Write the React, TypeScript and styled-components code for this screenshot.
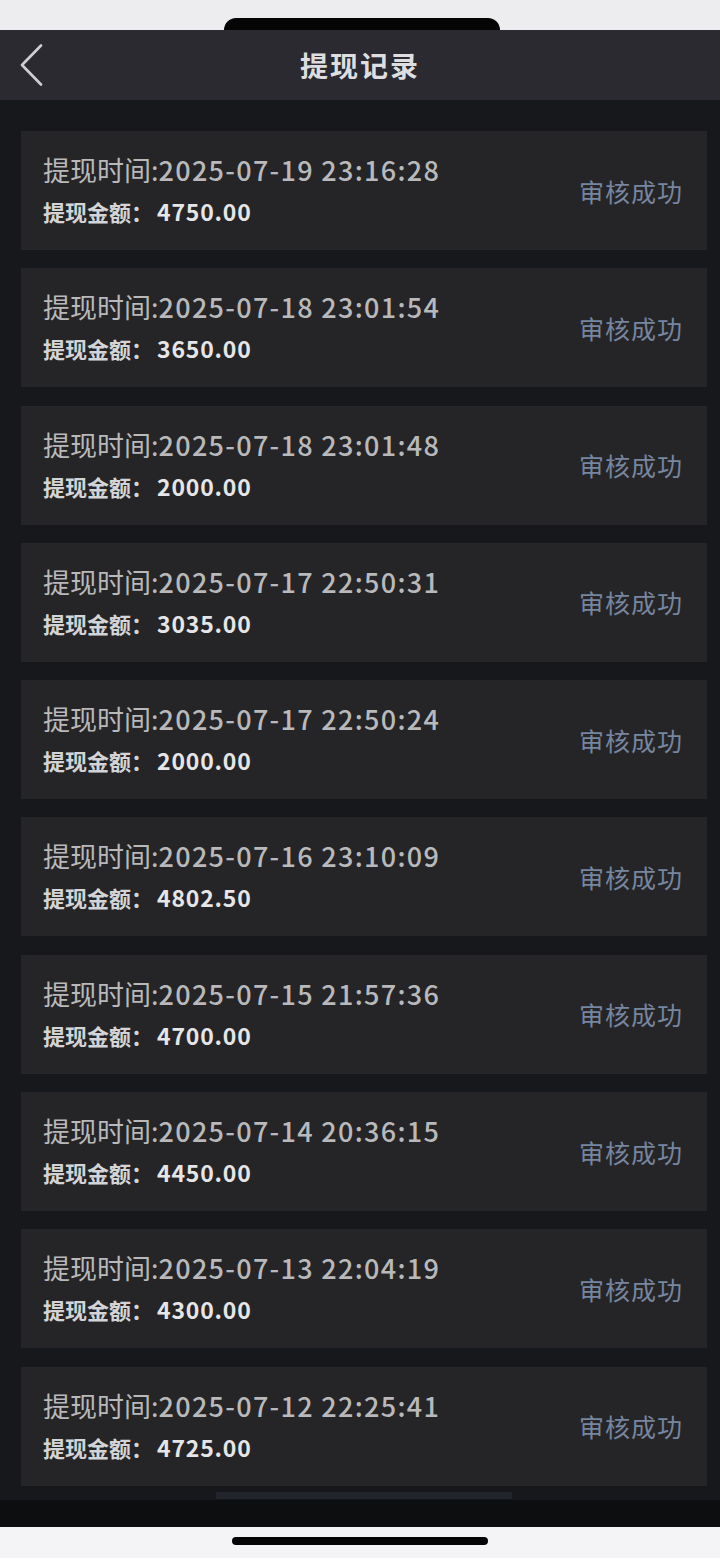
import { createGlobalStyle, styled } from "styled-components";

const records = [
	{ time: "2025-07-19 23:16:28", amount: "4750.00" },
	{ time: "2025-07-18 23:01:54", amount: "3650.00" },
	{ time: "2025-07-18 23:01:48", amount: "2000.00" },
	{ time: "2025-07-17 22:50:31", amount: "3035.00" },
	{ time: "2025-07-17 22:50:24", amount: "2000.00" },
	{ time: "2025-07-16 23:10:09", amount: "4802.50" },
	{ time: "2025-07-15 21:57:36", amount: "4700.00" },
	{ time: "2025-07-14 20:36:15", amount: "4450.00" },
	{ time: "2025-07-13 22:04:19", amount: "4300.00" },
	{ time: "2025-07-12 22:25:41", amount: "4725.00" },
];

export default function App() {
	return (
		<>
			<GlobalStyle />
			<Screen>
				<StatusBar>
					<Island />
				</StatusBar>
				<Header>
					<BackButton aria-label="返回">
						<svg width="24" height="42" viewBox="0 0 24 42" fill="none">
							<path d="M22 1.5 L3 21 L22 40.5" stroke="#cfcfd2" strokeWidth="2.6" strokeLinecap="round" strokeLinejoin="round" />
						</svg>
					</BackButton>
					<Title>提现记录</Title>
					<span />
				</Header>
				<List>
					{records.map((r) => (
						<Card key={r.time + r.amount}>
							<Info>
								<TimeLine>
									提现时间:<Digits>{r.time}</Digits>
								</TimeLine>
								<AmountLine>
									提现金额：<Amount>{r.amount}</Amount>
								</AmountLine>
							</Info>
							<Status>审核成功</Status>
						</Card>
					))}
				</List>
				<ScrollTrack>
					<ScrollThumb />
				</ScrollTrack>
				<BottomBand />
				<HomeArea>
					<HomeIndicator />
				</HomeArea>
			</Screen>
		</>
	);
}

//#region Styled Components
const GlobalStyle = createGlobalStyle`
  body {
    margin: 0;
    background: #ededf0;
    font-family: "Noto Sans CJK SC", "Noto Sans", sans-serif;
  }
`;

const Screen = styled.div`
  width: 720px;
  height: 1558px;
  display: flex;
  flex-direction: column;
  overflow: hidden;
`;

const StatusBar = styled.div`
  height: 30px;
  background: #ededf0;
  display: flex;
  justify-content: center;
  align-items: flex-end;
`;

const Island = styled.div`
  width: 276px;
  height: 12px;
  margin-left: 4px;
  background: #050505;
  border-radius: 22px 22px 0 0;
`;

const Header = styled.header`
  height: 70px;
  background: #2a2a30;
  display: grid;
  grid-template-columns: 80px 1fr 80px;
  align-items: center;
`;

const BackButton = styled.button`
  border: none;
  background: transparent;
  padding: 0 0 0 19px;
  display: flex;
  align-items: center;
  height: 100%;
`;

const Title = styled.h1`
  margin: 0;
  text-align: center;
  font-size: 28px;
  font-weight: 700;
  color: #dedee0;
  letter-spacing: 2px;
`;

const List = styled.main`
  background: #16181c;
  padding: 31px 13px 6px 21px;
  display: flex;
  flex-direction: column;
  gap: 18.3px;
`;

const Card = styled.section`
  height: 119px;
  box-sizing: border-box;
  background: #252527;
  display: flex;
  align-items: center;
  justify-content: space-between;
  padding: 0 24px 0 22px;
`;

const Info = styled.div`
  display: flex;
  flex-direction: column;
  gap: 10px;
  margin-top: -2px;
`;

const TimeLine = styled.div`
  font-size: 27px;
  line-height: 33px;
  color: #b9b9bb;
  white-space: nowrap;
`;

const Digits = styled.span`
  font-size: 27px;
  font-weight: 500;
  letter-spacing: 1.3px;
`;

const AmountLine = styled.div`
  font-size: 22px;
  line-height: 30px;
  font-weight: 700;
  color: #d4d4d6;
  white-space: nowrap;
`;

const Amount = styled.span`
  font-size: 23px;
  color: #e6e6e8;
  letter-spacing: 0.8px;
  margin-left: 4px;
`;

const Status = styled.div`
  font-size: 25px;
  color: #77869f;
  letter-spacing: 1px;
`;

const ScrollTrack = styled.div`
  background: #16181c;
  height: 8px;
  display: flex;
  justify-content: center;
`;

const ScrollThumb = styled.div`
  width: 296px;
  height: 7px;
  margin-left: 8px;
  background: #22242c;
`;

const BottomBand = styled.div`
  height: 27px;
  background: #0d0e10;
`;

const HomeArea = styled.div`
  flex: 1;
  background: #f4f4f6;
  display: flex;
  justify-content: center;
  padding-top: 10px;
`;

const HomeIndicator = styled.div`
  width: 256px;
  height: 8px;
  border-radius: 4px;
  background: #050505;
`;
//#endregion
